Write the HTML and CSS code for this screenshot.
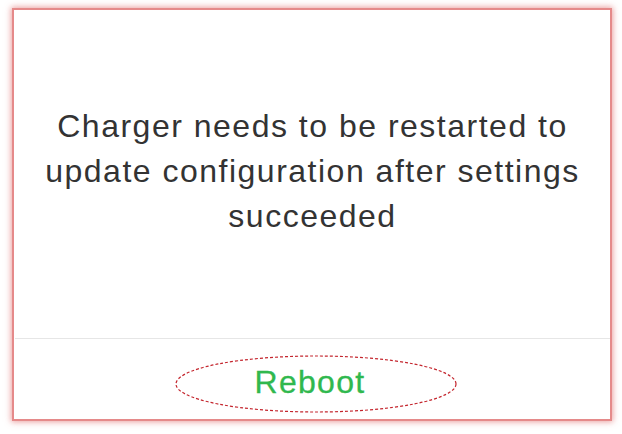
FILE: index.html
```html
<!DOCTYPE html>
<html>
<head>
<meta charset="utf-8">
<link rel="stylesheet" href="styles.css">
</head>
<body>
<div class="card">
  <div class="message">
    <p>Charger needs to be restarted to<br>update configuration after settings<br>succeeded</p>
  </div>
  <div class="actions">
    <button class="reboot">Reboot</button>
    <svg class="mark" width="284" height="60" viewBox="0 0 284 60">
      <ellipse cx="142" cy="30" rx="140" ry="28" fill="none" stroke="#c4262e" stroke-width="1.2" stroke-dasharray="3 2"/>
    </svg>
  </div>
</div>
</body>
</html>
```
FILE: styles.css
```css
html, body {
  margin: 0;
  padding: 0;
  background: #ffffff;
}
body {
  width: 622px;
  height: 434px;
  overflow: hidden;
  font-family: "Liberation Sans", Arial, sans-serif;
}
.card {
  margin: 8px 0 0 12px;
  width: 600px;
  height: 413px;
  box-sizing: border-box;
  border: 2px solid #e58a8a;
  box-shadow: 0 0 6px 1px rgba(225, 110, 110, 0.65);
  background: #fff;
  display: flex;
  flex-direction: column;
}
.message {
  height: 328px;
  border-bottom: 1px solid #e6e6e6;
  margin-left: 1px;
  display: flex;
  align-items: center;
  justify-content: center;
}
.message p {
  margin: 0 0 6px;
  text-align: center;
  color: #333333;
  font-size: 32px;
  line-height: 45px;
  letter-spacing: 1.5px;
}
.actions {
  flex: 1;
  position: relative;
  display: flex;
  align-items: center;
  justify-content: center;
}
.reboot {
  border: 0;
  background: none;
  padding: 0;
  margin: 6px 4px 0 0;
  font-family: "Liberation Sans", Arial, sans-serif;
  font-size: 32px;
  letter-spacing: 1.3px;
  color: #30b84e;
  -webkit-text-stroke: 0.3px #30b84e;
}
.mark {
  position: absolute;
  left: 160px;
  top: 15px;
}
```
